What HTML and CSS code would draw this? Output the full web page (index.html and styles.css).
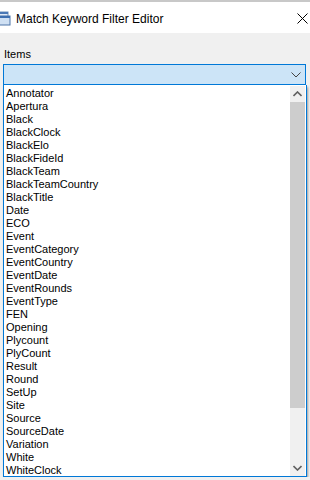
FILE: index.html
```html
<!DOCTYPE html>
<html>

<head>
    <title>Match Keyword Filter Editor</title>
    <meta name="viewport" content="width=device-width, initial-scale=1">
    <link rel="stylesheet" href="styles.css">
</head>
<body>
    <div class="titlebar">
        <svg class="app-icon" width="11" height="15" viewBox="0 0 11 15">
            <rect x="-4" y="1" width="12" height="9" fill="#dfe9f5" stroke="#6d8fb8"/>
            <rect x="-4" y="1" width="12" height="2" fill="#4a78b5"/>
            <rect x="-1" y="5" width="11" height="9" fill="#cfe0f3" stroke="#4d74a8"/>
            <rect x="-1" y="5" width="11" height="2" fill="#3d6fb0"/>
        </svg>
        <span class="title">Match Keyword Filter Editor</span>
        <svg class="close" width="11" height="11" viewBox="0 0 11 11">
            <path d="M0.5 0.5 L10.5 10.5 M10.5 0.5 L0.5 10.5" stroke="#000" stroke-width="1"/>
        </svg>
    </div>

    <div class="content">
        <div class="label">Items</div>
        <div class="combo">
            <svg class="chevron" width="10" height="6" viewBox="0 0 10 6">
                <path d="M0.5 0.5 L5 5 L9.5 0.5" fill="none" stroke="#444" stroke-width="1"/>
            </svg>
        </div>
        <div class="dropdown">
            <div class="items" id="items"></div>
            <div class="scrollbar">
                <div class="scroll-btn">
                    <svg width="9" height="6" viewBox="0 0 9 6">
                        <path d="M0.5 5 L4.5 1 L8.5 5" fill="none" stroke="#606060" stroke-width="1.6"/>
                    </svg>
                </div>
                <div class="thumb"></div>
                <div class="track"></div>
                <div class="scroll-btn">
                    <svg width="9" height="6" viewBox="0 0 9 6">
                        <path d="M0.5 1 L4.5 5 L8.5 1" fill="none" stroke="#606060" stroke-width="1.6"/>
                    </svg>
                </div>
            </div>
        </div>
    </div>

    <script>
        // Keyword names shown in the open combo list
        var keywords = ["Annotator", "Apertura", "Black", "BlackClock", "BlackElo", "BlackFideId",
            "BlackTeam", "BlackTeamCountry", "BlackTitle", "Date", "ECO", "Event", "EventCategory",
            "EventCountry", "EventDate", "EventRounds", "EventType", "FEN", "Opening", "Plycount",
            "PlyCount", "Result", "Round", "SetUp", "Site", "Source", "SourceDate", "Variation",
            "White", "WhiteClock"];

        var list = document.getElementById("items");
        for (var i = 0; i < keywords.length; i++) {
            var row = document.createElement("div");
            row.className = "item";
            row.textContent = keywords[i];
            list.appendChild(row);
        }
    </script>
</body>

</html>
```

FILE: styles.css
```css
body {
    margin: 0;
    padding: 0;
    background-color: #f0f0f0;
    font-family: "Liberation Sans", Arial, sans-serif;
    overflow: hidden;
}

.titlebar {
    display: flex;
    align-items: center;
    height: 31px;
    border-top: 2px solid #c8c8c8;
    background-color: #ffffff;
}

.app-icon {
    margin-left: 0;
    margin-top: 1px;
}

.title {
    margin-left: 5px;
    margin-top: 2px;
    font-family: "Liberation Sans", Arial, sans-serif;
    font-size: 12px;
    color: #000000;
    flex: 1;
}

.close {
    margin-right: 2px;
    margin-top: 1px;
}

.content {
    padding: 0 4px 0 3px;
}

.label {
    font-size: 11px;
    line-height: 13px;
    padding-top: 15px;
    height: 16px;
    padding-left: 1px;
}

.combo {
    display: flex;
    align-items: center;
    justify-content: flex-end;
    height: 19px;
    border: 1px solid #0078d7;
    background-color: #cce4f7;
}

.chevron {
    margin-right: 4px;
    margin-top: 1px;
}

.dropdown {
    display: flex;
    height: 391px;
    border: 1px solid #0078d7;
    border-top: none;
    background-color: #ffffff;
    box-shadow: 1px 2px 2px rgba(0, 0, 0, 0.35);
    margin-right: -1px;
}

.items {
    flex: 1;
    padding: 2px 0 0 2px;
    overflow: hidden;
}

.item {
    font-size: 11px;
    line-height: 13px;
    height: 13px;
    color: #000000;
    white-space: nowrap;
}

.scrollbar {
    display: flex;
    flex-direction: column;
    width: 15px;
    margin: 1px 1px 0 0;
    background-color: #f0f0f0;
}

.scroll-btn {
    display: flex;
    align-items: center;
    justify-content: center;
    height: 16px;
}

.thumb {
    height: 306px;
    background-color: #cdcdcd;
}

.track {
    flex: 1;
}
```
